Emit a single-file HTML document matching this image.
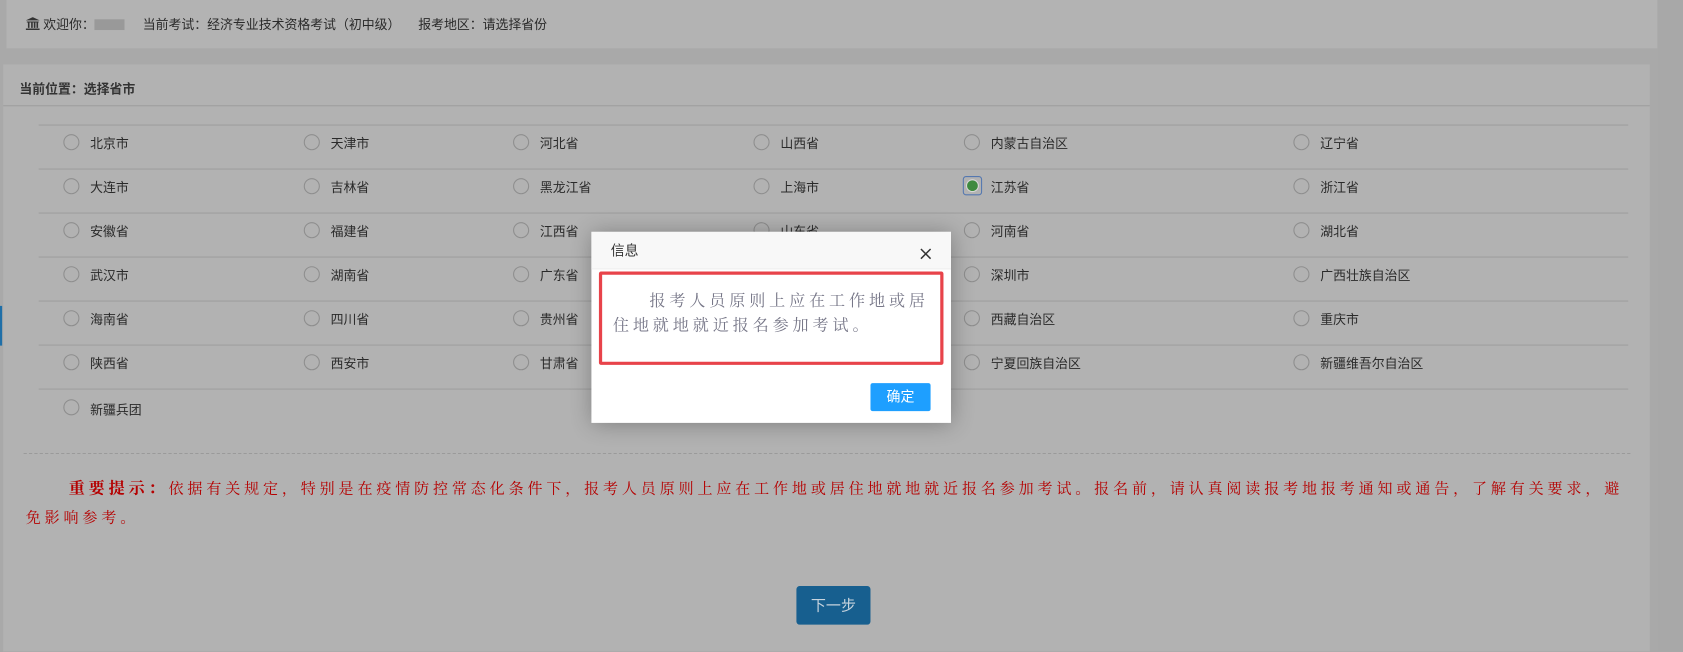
<!DOCTYPE html>
<html><head><meta charset="utf-8"><style>
html,body{margin:0;padding:0;width:1683px;height:651px;overflow:hidden;background:#a8a8a8;}
#w{position:absolute;left:0;top:0;width:1568px;height:607px;transform:scale(1.07334);transform-origin:0 0;background:#a9a9a9;font-family:"Liberation Sans","Noto Sans CJK SC",sans-serif;font-size:12px;color:#2a2a2a;}
.a{position:absolute;}
.hdr{left:6px;top:0;width:1538px;height:45px;background:#b3b3b3;}
.panel{left:3px;top:60px;width:1534px;height:547px;background:#b2b2b2;}
.sb{left:1545px;top:0;width:23px;height:607px;background:#a8a8a8;}
.hl{height:1px;background:#9e9e9e;}
.r{position:absolute;width:15px;height:15px;border:1px solid #8e8e8e;border-radius:50%;box-sizing:border-box;margin:-1px 0 0 -1px;}
.t{position:absolute;font-size:12px;color:#2a2a2a;white-space:nowrap;}
.red{color:#b50000;font-family:"Liberation Serif","Noto Serif CJK SC",serif;font-size:14px;letter-spacing:3.6px;}
</style></head><body><div id="w">
<div class="a hdr"></div>
<div class="a sb"></div>
<div class="a panel"></div>
<div class="a" style="left:0;top:285px;width:2px;height:37px;background:#1f6fa8"></div>
<div class="a" style="left:24px;top:14px;font-size:12px;">
<svg width="13" height="12" viewBox="0 0 13 12" style="vertical-align:-1px"><path d="M6.5 0L0 3h13z M1 4h11v1H1z M2 5h1.5v5H2z M5 5h1.5v5H5z M7.5 5H9v5H7.5z M10 5h1.5v5H10z M0 10.5h13V12H0z" fill="#333"/></svg>
 欢迎你：<span style="display:inline-block;width:28px;height:10px;background:#999;vertical-align:-1px"></span>&nbsp;&nbsp;&nbsp;&nbsp; 当前考试：经济专业技术资格考试（初中级）&nbsp;&nbsp;&nbsp;&nbsp; 报考地区：请选择省份</div>
<div class="a" style="left:18px;top:74px;font-weight:bold;color:#333;">当前位置：选择省市</div>
<div class="a hl" style="left:3px;top:98px;width:1534px;"></div>

<div class="a hl" style="left:36px;top:116px;width:1481px;"></div>
<div class="a hl" style="left:36px;top:157px;width:1481px;"></div>
<div class="a hl" style="left:36px;top:198px;width:1481px;"></div>
<div class="a hl" style="left:36px;top:239px;width:1481px;"></div>
<div class="a hl" style="left:36px;top:280px;width:1481px;"></div>
<div class="a hl" style="left:36px;top:321px;width:1481px;"></div>
<div class="a hl" style="left:36px;top:362px;width:1481px;"></div>
<div class="a" style="left:22px;top:422px;width:1497px;border-top:1px dashed #9a9a9a;"></div>

<div class="r" style="left:60px;top:126px"></div><div class="t" style="left:84px;top:125px">北京市</div>
<div class="r" style="left:284px;top:126px"></div><div class="t" style="left:308px;top:125px">天津市</div>
<div class="r" style="left:479px;top:126px"></div><div class="t" style="left:503px;top:125px">河北省</div>
<div class="r" style="left:703px;top:126px"></div><div class="t" style="left:727px;top:125px">山西省</div>
<div class="r" style="left:899px;top:126px"></div><div class="t" style="left:923px;top:125px">内蒙古自治区</div>
<div class="r" style="left:1206px;top:126px"></div><div class="t" style="left:1230px;top:125px">辽宁省</div>

<div class="r" style="left:60px;top:167px"></div><div class="t" style="left:84px;top:166px">大连市</div>
<div class="r" style="left:284px;top:167px"></div><div class="t" style="left:308px;top:166px">吉林省</div>
<div class="r" style="left:479px;top:167px"></div><div class="t" style="left:503px;top:166px">黑龙江省</div>
<div class="r" style="left:703px;top:167px"></div><div class="t" style="left:727px;top:166px">上海市</div>
<div class="a" style="left:897px;top:164px;width:18px;height:18px;border:1px solid #5578b0;border-radius:3px;box-sizing:border-box;background:#b2b2b2"><div style="position:absolute;left:2px;top:2px;width:12px;height:12px;border-radius:50%;background:#3e8a3e;border:1px solid #d8d8d8;box-sizing:border-box"></div></div><div class="t" style="left:923px;top:166px">江苏省</div>
<div class="r" style="left:1206px;top:167px"></div><div class="t" style="left:1230px;top:166px">浙江省</div>

<div class="r" style="left:60px;top:208px"></div><div class="t" style="left:84px;top:207px">安徽省</div>
<div class="r" style="left:284px;top:208px"></div><div class="t" style="left:308px;top:207px">福建省</div>
<div class="r" style="left:479px;top:208px"></div><div class="t" style="left:503px;top:207px">江西省</div>
<div class="r" style="left:703px;top:208px"></div><div class="t" style="left:727px;top:207px">山东省</div>
<div class="r" style="left:899px;top:208px"></div><div class="t" style="left:923px;top:207px">河南省</div>
<div class="r" style="left:1206px;top:208px"></div><div class="t" style="left:1230px;top:207px">湖北省</div>

<div class="r" style="left:60px;top:249px"></div><div class="t" style="left:84px;top:248px">武汉市</div>
<div class="r" style="left:284px;top:249px"></div><div class="t" style="left:308px;top:248px">湖南省</div>
<div class="r" style="left:479px;top:249px"></div><div class="t" style="left:503px;top:248px">广东省</div>
<div class="r" style="left:899px;top:249px"></div><div class="t" style="left:923px;top:248px">深圳市</div>
<div class="r" style="left:1206px;top:249px"></div><div class="t" style="left:1230px;top:248px">广西壮族自治区</div>

<div class="r" style="left:60px;top:290px"></div><div class="t" style="left:84px;top:289px">海南省</div>
<div class="r" style="left:284px;top:290px"></div><div class="t" style="left:308px;top:289px">四川省</div>
<div class="r" style="left:479px;top:290px"></div><div class="t" style="left:503px;top:289px">贵州省</div>
<div class="r" style="left:899px;top:290px"></div><div class="t" style="left:923px;top:289px">西藏自治区</div>
<div class="r" style="left:1206px;top:290px"></div><div class="t" style="left:1230px;top:289px">重庆市</div>

<div class="r" style="left:60px;top:331px"></div><div class="t" style="left:84px;top:330px">陕西省</div>
<div class="r" style="left:284px;top:331px"></div><div class="t" style="left:308px;top:330px">西安市</div>
<div class="r" style="left:479px;top:331px"></div><div class="t" style="left:503px;top:330px">甘肃省</div>
<div class="r" style="left:899px;top:331px"></div><div class="t" style="left:923px;top:330px">宁夏回族自治区</div>
<div class="r" style="left:1206px;top:331px"></div><div class="t" style="left:1230px;top:330px">新疆维吾尔自治区</div>

<div class="r" style="left:60px;top:373px"></div><div class="t" style="left:84px;top:373px">新疆兵团</div>

<div class="a red" style="left:24px;top:443px;width:1500px;line-height:27px;text-indent:40px;"><b style="font-size:15px">重要提示：</b>依据有关规定，特别是在疫情防控常态化条件下，报考人员原则上应在工作地或居住地就地就近报名参加考试。报名前，请认真阅读报考地报考通知或通告，了解有关要求，避免影响参考。</div>

<div class="a" style="left:742px;top:546px;width:69px;height:36px;background:#175f8f;border-radius:3px;color:#c8d4de;font-size:14px;line-height:36px;text-align:center;">下一步</div>

<div class="a" style="left:551px;top:216px;width:335px;height:178px;background:#fff;box-shadow:1px 1px 20px rgba(0,0,0,.3);">
<div style="height:34px;background:#f8f8f8;border-bottom:1px solid #eee;font-size:13px;line-height:36px;padding-left:18px;color:#333;">信息</div>
<svg style="position:absolute;left:306px;top:15px" width="11" height="11" viewBox="0 0 11 11"><path d="M1 1L10 10M10 1L1 10" stroke="#333" stroke-width="1.4"/></svg>
<div style="position:absolute;left:7px;top:37px;width:321px;height:87px;border:3px solid #e8434a;box-sizing:border-box;border-radius:2px;"></div>
<div style="position:absolute;left:20px;top:54px;width:305px;font-family:'Liberation Serif','Noto Serif CJK SC',serif;font-size:15px;line-height:23px;color:#778;letter-spacing:3.6px;text-indent:34px;">报考人员原则上应在工作地或居住地就地就近报名参加考试。</div>
<div style="position:absolute;left:260px;top:141px;width:56px;height:26px;background:#1e9fff;border-radius:2px;color:#fff;font-size:13px;line-height:26px;text-align:center;">确定</div>
</div>
</div></body></html>
